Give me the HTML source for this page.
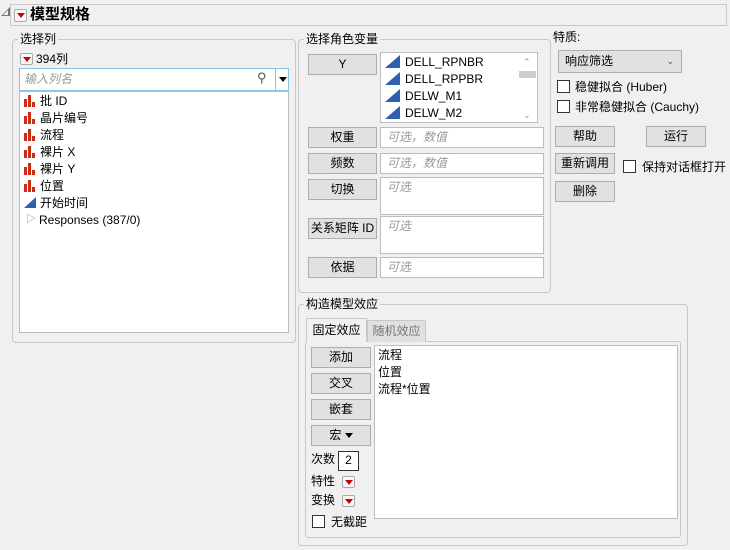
<!DOCTYPE html>
<html><head><meta charset="utf-8"><style>
*{box-sizing:border-box;margin:0;padding:0}
body{width:730px;height:550px;background:#f0f0f0;font-family:"Liberation Sans","Noto Sans CJK SC",sans-serif;font-size:12px;color:#000;position:relative;overflow:hidden}
.a{position:absolute}
.grp{position:absolute;border:1px solid #c8c8c8;border-radius:4px}
.lbl{position:absolute;background:#f0f0f0;padding:0 2px;font-size:12px;line-height:14px}
.btn{position:absolute;background:#e1e1e1;border:1px solid #adadad;text-align:center;line-height:18px;font-size:12px}
.fld{position:absolute;background:#fff;border:1px solid #bdbdbd;color:#999;font-style:italic;padding:2px 6px;line-height:14px}
.box{position:absolute;background:#fff;border:1px solid #bdbdbd}
.it{position:absolute;line-height:16px;white-space:nowrap}
.rb{position:absolute;width:13px;height:12px;border:1px solid #aaa;border-radius:2px;background:#f8f8f8}
.rb:after{content:"";position:absolute;left:2px;top:3px;border-left:4px solid transparent;border-right:4px solid transparent;border-top:5px solid #c00}
.cb{position:absolute;width:13px;height:13px;border:1px solid #333;background:#fff}
.bar{position:absolute;width:14px;height:12px}
.bar i{position:absolute;bottom:0;background:#d02a10;width:3px}
.tri{position:absolute;width:0;height:0;border-left:15px solid transparent;border-bottom:13px solid #2e5fb0}
</style></head><body>
<div class="a" style="left:1px;top:7px;width:0;height:0;border-left:9px solid transparent;border-bottom:9px solid #777"></div>
<div class="a" style="left:3px;top:10px;width:0;height:0;border-left:5px solid transparent;border-bottom:5px solid #f0f0f0"></div>
<div class="a" style="left:10px;top:4px;width:717px;height:22px;border:1px solid #c8c8c8;background:#f0f0f0"></div>
<div class="rb" style="left:14px;top:9px;height:13px"></div>
<div class="a" style="left:30px;top:6px;font-size:15px;font-weight:bold;line-height:18px">模型规格</div>

<div class="grp" style="left:12px;top:39px;width:284px;height:304px"></div>
<div class="lbl" style="left:18px;top:32px">选择列</div>
<div class="rb" style="left:20px;top:53px"></div>
<div class="it" style="left:36px;top:51px">394列</div>
<div class="box" style="left:19px;top:68px;width:270px;height:23px;border-color:#8cc4e8"></div>
<div class="it" style="left:24px;top:71px;color:#999;font-style:italic">输入列名</div>
<div class="it" style="left:257px;top:70px;color:#555;font-size:13px">&#9906;</div>
<div class="a" style="left:275px;top:69px;width:1px;height:21px;background:#8cc4e8"></div>
<div class="a" style="left:279px;top:77px;border-left:4px solid transparent;border-right:4px solid transparent;border-top:5px solid #000"></div>
<div class="box" style="left:19px;top:91px;width:270px;height:242px"></div>
<div class="bar" style="left:24px;top:95px"><i style="left:0;height:8px"></i><i style="left:4px;height:12px"></i><i style="left:8px;height:5px"></i></div>
<div class="it" style="left:40px;top:93px">批 ID</div>
<div class="bar" style="left:24px;top:112px"><i style="left:0;height:8px"></i><i style="left:4px;height:12px"></i><i style="left:8px;height:5px"></i></div>
<div class="it" style="left:40px;top:110px">晶片编号</div>
<div class="bar" style="left:24px;top:129px"><i style="left:0;height:8px"></i><i style="left:4px;height:12px"></i><i style="left:8px;height:5px"></i></div>
<div class="it" style="left:40px;top:127px">流程</div>
<div class="bar" style="left:24px;top:146px"><i style="left:0;height:8px"></i><i style="left:4px;height:12px"></i><i style="left:8px;height:5px"></i></div>
<div class="it" style="left:40px;top:144px">裸片 X</div>
<div class="bar" style="left:24px;top:163px"><i style="left:0;height:8px"></i><i style="left:4px;height:12px"></i><i style="left:8px;height:5px"></i></div>
<div class="it" style="left:40px;top:161px">裸片 Y</div>
<div class="bar" style="left:24px;top:180px"><i style="left:0;height:8px"></i><i style="left:4px;height:12px"></i><i style="left:8px;height:5px"></i></div>
<div class="it" style="left:40px;top:178px">位置</div>
<div class="tri" style="left:24px;top:197px;border-left-width:12px;border-bottom-width:11px"></div>
<div class="it" style="left:40px;top:195px">开始时间</div>
<div class="it" style="left:26px;top:212px;color:#888;font-size:10px">&#9655;</div>
<div class="it" style="left:39px;top:212px">Responses (387/0)</div>

<div class="grp" style="left:298px;top:39px;width:253px;height:254px"></div>
<div class="lbl" style="left:304px;top:32px">选择角色变量</div>
<div class="btn" style="left:308px;top:54px;width:69px;height:21px">Y</div>
<div class="box" style="left:380px;top:52px;width:158px;height:71px"></div>
<div class="tri" style="left:385px;top:55px"></div><div class="it" style="left:405px;top:54px">DELL_RPNBR</div>
<div class="tri" style="left:385px;top:72px"></div><div class="it" style="left:405px;top:71px">DELL_RPPBR</div>
<div class="tri" style="left:385px;top:89px"></div><div class="it" style="left:405px;top:88px">DELW_M1</div>
<div class="tri" style="left:385px;top:106px"></div><div class="it" style="left:405px;top:105px">DELW_M2</div>
<div class="it" style="left:523px;top:54px;color:#999;font-size:9px">&#8963;</div>
<div class="a" style="left:519px;top:71px;width:17px;height:7px;background:#cdcdcd"></div>
<div class="it" style="left:523px;top:107px;color:#999;font-size:9px">&#8964;</div>
<div class="btn" style="left:308px;top:127px;width:69px;height:21px">权重</div>
<div class="fld" style="left:380px;top:127px;width:164px;height:21px">可选，数值</div>
<div class="btn" style="left:308px;top:153px;width:69px;height:21px">频数</div>
<div class="fld" style="left:380px;top:153px;width:164px;height:21px">可选，数值</div>
<div class="btn" style="left:308px;top:179px;width:69px;height:21px">切换</div>
<div class="fld" style="left:380px;top:177px;width:164px;height:38px">可选</div>
<div class="btn" style="left:308px;top:218px;width:69px;height:21px">关系矩阵 ID</div>
<div class="fld" style="left:380px;top:216px;width:164px;height:38px">可选</div>
<div class="btn" style="left:308px;top:257px;width:69px;height:21px">依据</div>
<div class="fld" style="left:380px;top:257px;width:164px;height:21px">可选</div>

<div class="it" style="left:553px;top:29px">特质:</div>
<div class="btn" style="left:558px;top:50px;width:124px;height:23px;text-align:left;padding-left:6px;line-height:21px">响应筛选<span style="position:absolute;right:7px;top:0;font-size:9px;color:#555">&#8964;</span></div>
<div class="cb" style="left:557px;top:80px"></div><div class="it" style="left:575px;top:79px">稳健拟合 (Huber)</div>
<div class="cb" style="left:557px;top:100px"></div><div class="it" style="left:575px;top:99px">非常稳健拟合 (Cauchy)</div>
<div class="btn" style="left:555px;top:126px;width:60px;height:21px">帮助</div>
<div class="btn" style="left:646px;top:126px;width:60px;height:21px">运行</div>
<div class="btn" style="left:555px;top:153px;width:60px;height:21px">重新调用</div>
<div class="cb" style="left:623px;top:160px"></div><div class="it" style="left:642px;top:159px">保持对话框打开</div>
<div class="btn" style="left:555px;top:181px;width:60px;height:21px">删除</div>

<div class="grp" style="left:298px;top:304px;width:390px;height:242px"></div>
<div class="lbl" style="left:304px;top:297px">构造模型效应</div>
<div class="a" style="left:305px;top:341px;width:376px;height:197px;border:1px solid #c8c8c8;border-radius:3px"></div>
<div class="a" style="left:306px;top:318px;width:61px;height:24px;border:1px solid #c8c8c8;border-bottom:none;background:#f0f0f0;text-align:center;line-height:22px">固定效应</div>
<div class="a" style="left:367px;top:320px;width:59px;height:22px;border:1px solid #c8c8c8;border-bottom:none;background:#e0e0e0;color:#777;text-align:center;line-height:20px">随机效应</div>
<div class="btn" style="left:311px;top:347px;width:60px;height:21px">添加</div>
<div class="btn" style="left:311px;top:373px;width:60px;height:21px">交叉</div>
<div class="btn" style="left:311px;top:399px;width:60px;height:21px">嵌套</div>
<div class="btn" style="left:311px;top:425px;width:60px;height:21px">宏 <span style="display:inline-block;vertical-align:middle;border-left:4px solid transparent;border-right:4px solid transparent;border-top:5px solid #000"></span></div>
<div class="it" style="left:311px;top:451px">次数</div>
<div class="box" style="left:338px;top:451px;width:21px;height:20px;border-color:#333;text-align:center;line-height:16px">2</div>
<div class="it" style="left:311px;top:473px">特性</div><div class="rb" style="left:342px;top:476px"></div>
<div class="it" style="left:311px;top:492px">变换</div><div class="rb" style="left:342px;top:495px"></div>
<div class="cb" style="left:312px;top:515px"></div><div class="it" style="left:331px;top:514px">无截距</div>
<div class="box" style="left:374px;top:345px;width:304px;height:174px"></div>
<div class="it" style="left:378px;top:347px">流程</div>
<div class="it" style="left:378px;top:364px">位置</div>
<div class="it" style="left:378px;top:381px">流程*位置</div>
</body></html>
